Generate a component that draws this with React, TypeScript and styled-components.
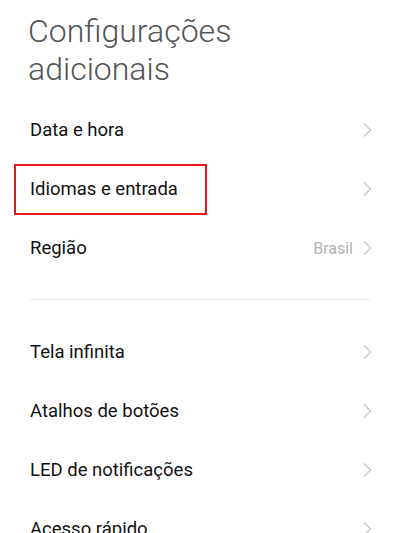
import React, { FC } from 'react'
import styled, { createGlobalStyle } from 'styled-components'

interface Item {
	label: string
	value?: string
	highlighted?: boolean
}

const firstGroup: Item[] = [
	{ label: 'Data e hora' },
	{ label: 'Idiomas e entrada', highlighted: true },
	{ label: 'Região', value: 'Brasil' },
]

const secondGroup: Item[] = [
	{ label: 'Tela infinita' },
	{ label: 'Atalhos de botões' },
	{ label: 'LED de notificações' },
	{ label: 'Acesso rápido' },
]

const Chevron: FC = () => (
	<StyledChevron width="10" height="16" viewBox="0 0 10 16">
		<path d="M2 1.5 L8.5 8 L2 14.5" fill="none" stroke="#c4c4c4" strokeWidth="1.2" />
	</StyledChevron>
)

const Row: FC<{ item: Item }> = ({ item }) => (
	<StyledRow $highlighted={item.highlighted}>
		<StyledLabel>{item.label}</StyledLabel>
		<StyledRight>
			{item.value && <StyledValue>{item.value}</StyledValue>}
			<Chevron />
		</StyledRight>
	</StyledRow>
)

const App: FC = () => (
	<>
		<GlobalStyle />
		<StyledPage>
			<StyledTitle>
				Configurações
				<br />
				adicionais
			</StyledTitle>
			<StyledList>
				{firstGroup.map((item) => (
					<Row key={item.label} item={item} />
				))}
			</StyledList>
			<StyledDivider />
			<StyledList>
				{secondGroup.map((item) => (
					<Row key={item.label} item={item} />
				))}
			</StyledList>
		</StyledPage>
	</>
)

export default App

const GlobalStyle = createGlobalStyle`
	html, body {
		margin: 0;
		padding: 0;
		background: #ffffff;
		overflow: hidden;
	}
	body {
		font-family: Roboto, 'Noto Sans', sans-serif;
	}
`

const StyledPage = styled.div`
	width: 400px;
	height: 533px;
	overflow: hidden;
	display: flex;
	flex-direction: column;
	padding-top: 12px;
	box-sizing: border-box;
`

const StyledTitle = styled.h1`
	margin: 0 0 12.5px 28px;
	font-size: 32px;
	line-height: 38px;
	font-weight: 300;
	color: #555555;
	letter-spacing: 0;
`

const StyledList = styled.div`
	display: flex;
	flex-direction: column;
`

const StyledRow = styled.div<{ $highlighted?: boolean }>`
	position: relative;
	height: 59px;
	display: flex;
	align-items: center;
	justify-content: space-between;
	padding: 0 28px 0 30px;
	flex-shrink: 0;

	&::after {
		content: '';
		display: ${({ $highlighted }) => ($highlighted ? 'block' : 'none')};
		position: absolute;
		left: 14px;
		top: 4.5px;
		width: 193px;
		height: 51px;
		border: 2px solid #e8141c;
		box-sizing: border-box;
	}
`

const StyledLabel = styled.span`
	font-size: 18.5px;
	font-weight: 400;
	color: #111111;
`

const StyledRight = styled.div`
	display: flex;
	align-items: center;
	gap: 9px;
`

const StyledValue = styled.span`
	font-size: 16px;
	color: #b3b3b3;
`

const StyledChevron = styled.svg`
	display: block;
`

const StyledDivider = styled.hr`
	border: none;
	border-top: 1px solid #ececec;
	margin: 21px 30px 22.5px;
	flex-shrink: 0;
`
